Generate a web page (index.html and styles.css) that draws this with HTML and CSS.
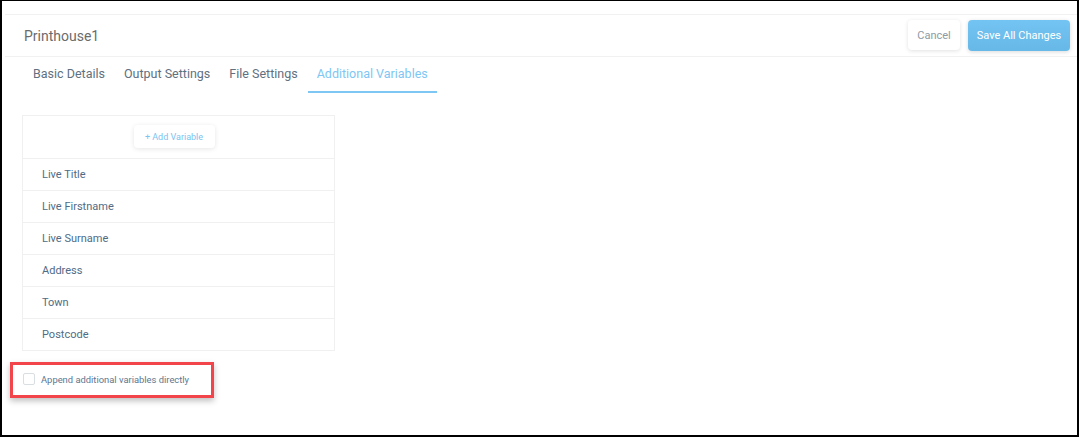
FILE: index.html
```
<!DOCTYPE html>
<html lang="en">

<head>
    <meta charset="UTF-8">
    <meta name="viewport" content="width=device-width, initial-scale=1.0">
    <title>Printhouse1 - Additional Variables</title>
    <link rel="stylesheet" href="styles.css">
</head>

<body>
    <div class="frame">
        <!-- Page header with title and actions -->
        <header class="page-header">
            <h1 class="page-title">Printhouse1</h1>
            <div class="header-actions">
                <button class="btn btn-cancel">Cancel</button>
                <button class="btn btn-save">Save All Changes</button>
            </div>
        </header>

        <nav class="tabs">
            <a class="tab">Basic Details</a>
            <a class="tab">Output Settings</a>
            <a class="tab">File Settings</a>
            <a class="tab active">Additional Variables</a>
        </nav>

        <section class="content">
            <div class="variables-card">
                <div class="card-top">
                    <button class="btn btn-add">+ Add Variable</button>
                </div>
                <ul class="variable-list">
                    <li>Live Title</li>
                    <li>Live Firstname</li>
                    <li>Live Surname</li>
                    <li>Address</li>
                    <li>Town</li>
                    <li>Postcode</li>
                </ul>
            </div>

            <!-- Highlighted option -->
            <div class="append-option">
                <label class="check">
                    <span class="check-box"></span>
                    <span class="check-label">Append additional variables directly</span>
                </label>
            </div>
        </section>
    </div>
</body>

</html>
```

FILE: styles.css
```
* {
    box-sizing: border-box;
}

body {
    margin: 0;
    font-family: Roboto, "Liberation Sans", sans-serif;
    background: #fff;
}

.frame {
    width: 1079px;
    height: 437px;
    border-style: solid;
    border-color: #000;
    border-width: 1px 2px 2px 2px;
    padding: 13px 0 0 3px;
    overflow: hidden;
}

.page-header {
    display: flex;
    align-items: center;
    justify-content: space-between;
    height: 43px;
    padding: 0 7px 0 19px;
    border-top: 1px solid #f1f1f1;
    border-bottom: 1px solid #f1f1f1;
}

.page-title {
    margin: 0;
    font-size: 14px;
    font-weight: 400;
    color: #6b6b6b;
}

.header-actions {
    display: flex;
    gap: 8px;
}

.btn {
    font-family: inherit;
    border: none;
    border-radius: 4px;
    cursor: pointer;
}

.btn-cancel {
    width: 52px;
    height: 30px;
    background: #fff;
    color: #8c9aa6;
    font-size: 11px;
    box-shadow: 0 1px 4px rgba(0, 0, 0, 0.12);
}

.btn-save {
    width: 102px;
    height: 31px;
    background: linear-gradient(#74c4f3, #66b8e6);
    color: #fff;
    font-size: 11px;
    box-shadow: 0 1px 4px rgba(0, 0, 0, 0.15);
}

.tabs {
    display: flex;
    gap: 1px;
    padding-left: 19px;
}

.tab {
    padding: 9px 9px 10px;
    font-size: 12.5px;
    color: #5f7080;
    border-bottom: 2px solid transparent;
}

.tab.active {
    color: #7ec6f3;
    border-bottom-color: #7ec6f3;
}

.content {
    padding: 22px 0 0 17px;
}

.variables-card {
    width: 313px;
    border: 1px solid #f0f0f0;
}

.card-top {
    display: flex;
    justify-content: center;
    padding: 9px 9px 10px 0;
}

.btn-add {
    width: 81px;
    height: 23px;
    background: #fff;
    color: #7cc3f0;
    font-size: 9px;
    box-shadow: 0 1px 5px rgba(0, 0, 0, 0.1);
}

.variable-list {
    list-style: none;
    margin: 0;
    padding: 0;
}

.variable-list li {
    height: 32px;
    line-height: 31px;
    padding-left: 19px;
    border-top: 1px solid #f0f0f0;
    font-size: 11px;
    color: #4f6b86;
}

.append-option {
    display: inline-block;
    margin: 11px 0 0 -12px;
    width: 204px;
    height: 36px;
    padding: 8px 0 0 10px;
    border: 3px solid #f2454b;
    box-shadow: 0 3px 6px rgba(0, 0, 0, 0.25);
}

.check {
    display: flex;
    align-items: center;
    gap: 6px;
}

.check-box {
    width: 12px;
    height: 12px;
    border: 1px solid #d9dee3;
    border-radius: 2px;
}

.check-label {
    font-size: 9.4px;
    color: #5d7690;
}
```
